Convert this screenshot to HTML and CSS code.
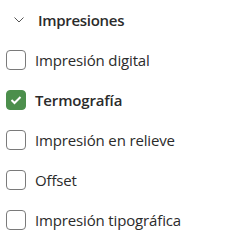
FILE: index.html
```html
<!DOCTYPE html>
<html lang="es">
<head>
<meta charset="utf-8">
<link rel="stylesheet" href="styles.css">
</head>
<body>
<div class="filter">
  <div class="header">
    <svg class="chev" width="10" height="6" viewBox="0 0 10 6"><path d="M0.5 0.5 L5 5 L9.5 0.5" fill="none" stroke="#555" stroke-width="1"/></svg>
    <span class="title">Impresiones</span>
  </div>
  <label class="row"><span class="box"></span><span class="label">Impresión digital</span></label>
  <label class="row checked"><span class="box"><svg width="12" height="10" viewBox="0 0 12 10"><path d="M1.5 5 L4.5 8 L10.5 2" fill="none" stroke="#fff" stroke-width="2"/></svg></span><span class="label">Termografía</span></label>
  <label class="row"><span class="box"></span><span class="label">Impresión en relieve</span></label>
  <label class="row"><span class="box"></span><span class="label">Offset</span></label>
  <label class="row"><span class="box"></span><span class="label">Impresión tipográfica</span></label>
</div>
</body>
</html>
```
FILE: styles.css
```css
html, body { margin: 0; padding: 0; background: #fff; }
body { font-family: "Open Sans", sans-serif; color: #2b2b2b; }
.filter { display: flex; flex-direction: column; padding-left: 6px; }
.header { height: 40px; display: flex; align-items: center; }
.chev { margin-left: 8px; margin-right: 14px; }
.title { font-size: 15px; font-weight: 600; letter-spacing: -0.3px; }
.row { height: 40px; display: flex; align-items: center; gap: 9px; }
.box { width: 18px; height: 18px; border: 1px solid #7a7a7a; border-radius: 4px; box-sizing: content-box; display: flex; align-items: center; justify-content: center; }
.checked .box { background: #4c8f4c; border-color: #4c8f4c; }
.label { font-size: 15px; letter-spacing: -0.15px; }
.checked .label { font-weight: 600; }
```
